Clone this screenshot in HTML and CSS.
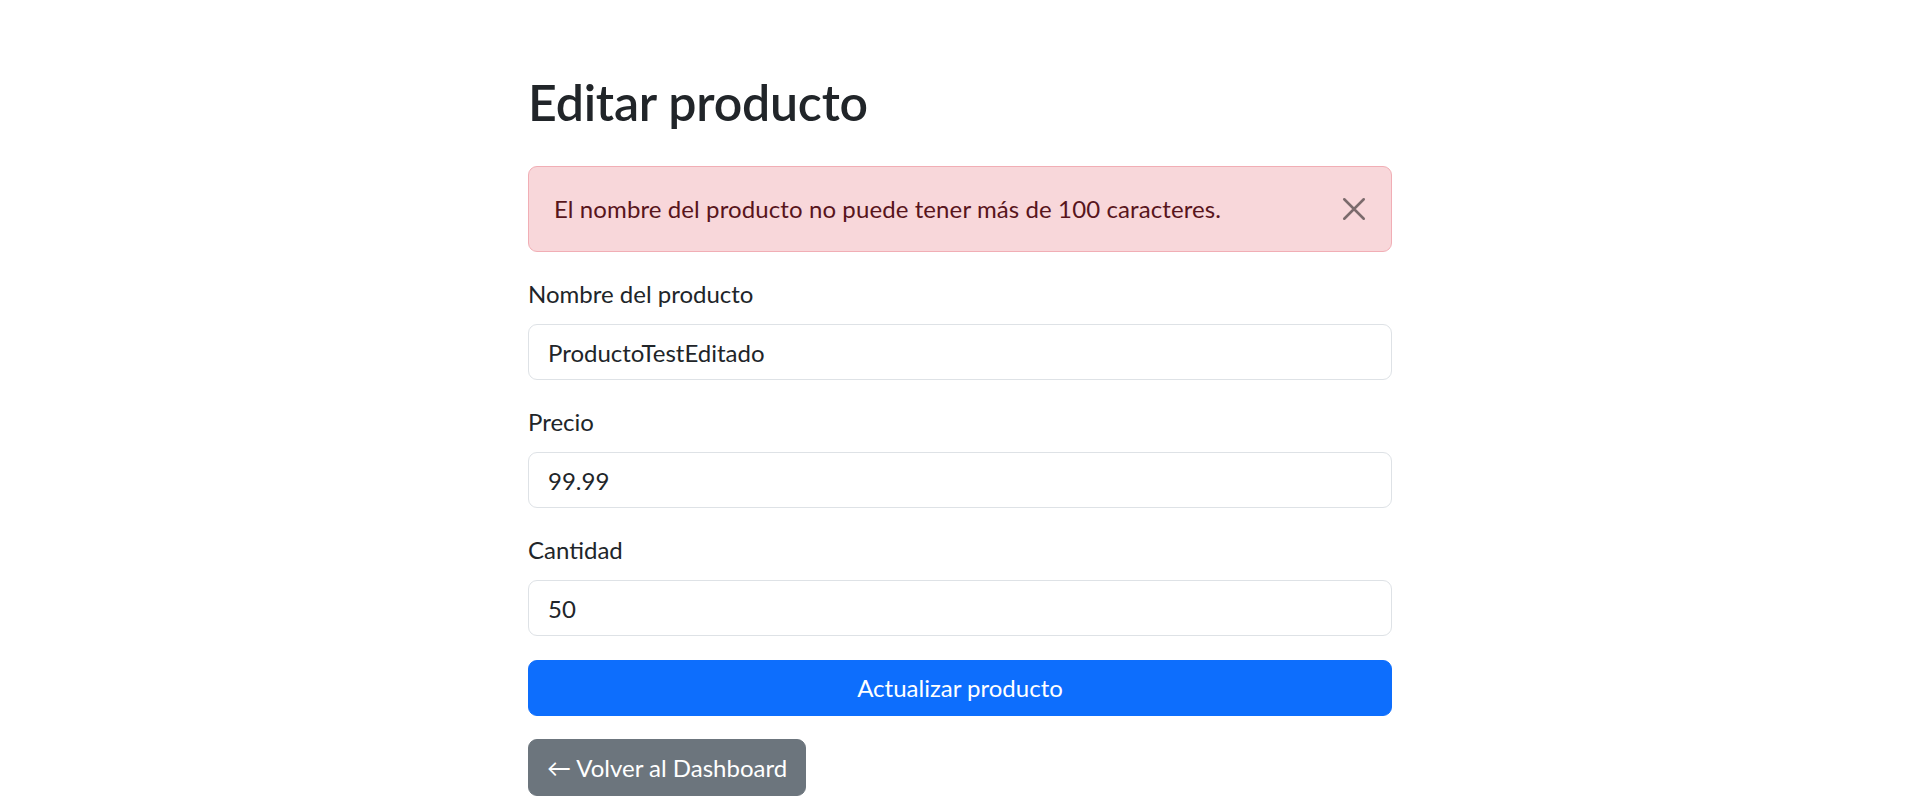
FILE: index.html
```html
<!DOCTYPE html>
<html lang="es">
<head>
<meta charset="utf-8">
<title>Editar producto</title>
<link rel="stylesheet" href="styles.css">
</head>
<body>
<main class="container">
  <h1 class="title">Editar producto</h1>
  <div class="alert" role="alert">
    <span class="alert-text">El nombre del producto no puede tener más de 100 caracteres.</span>
    <button class="btn-close" type="button" aria-label="Close">
      <svg viewBox="0 0 16 16" width="24" height="24"><path d="M1.5 1.5 L14.5 14.5 M14.5 1.5 L1.5 14.5" stroke="#000" stroke-width="1.7" stroke-linecap="round" fill="none"/></svg>
    </button>
  </div>
  <form class="form">
    <div class="group">
      <label class="label">Nombre del producto</label>
      <input class="input" type="text" value="ProductoTestEditado">
    </div>
    <div class="group">
      <label class="label">Precio</label>
      <input class="input" type="text" value="99.99">
    </div>
    <div class="group">
      <label class="label">Cantidad</label>
      <input class="input" type="text" value="50">
    </div>
    <button class="btn btn-primary" type="button">Actualizar producto</button>
  </form>
  <div class="back-row">
    <a class="btn btn-secondary" href="#">← Volver al Dashboard</a>
  </div>
</main>
</body>
</html>
```
FILE: styles.css
```css
* { box-sizing: border-box; }
html, body { margin: 0; padding: 0; background: #fff; }
body {
  font-family: Lato, "Noto Sans", sans-serif;
  color: #212529;
  font-size: 24px;
  line-height: 1.5;
}
.container {
  width: 864px;
  margin: 0 auto;
  padding-top: 72px;
}
.title {
  font-size: 50px;
  font-weight: 600;
  line-height: 60px;
  letter-spacing: -0.2px;
  margin: 0 0 34px 0;
}
.alert {
  position: relative;
  background: #f8d7da;
  border: 1px solid #f1aeb5;
  color: #58151c;
  border-radius: 9px;
  padding: 24px 72px 24px 25px;
  margin-bottom: 24px;
}
.alert-text { letter-spacing: 0.1px; }
.btn-close {
  position: absolute;
  top: 0;
  right: 0;
  border: 0;
  background: transparent;
  padding: 30px 25px;
  opacity: 0.5;
  display: flex;
  cursor: pointer;
}
.btn-close svg { display: block; }
.form { margin: 0; }
.group { margin-bottom: 24px; }
.label {
  display: block;
  line-height: 36px;
  margin-bottom: 12px;
}
.input {
  display: block;
  width: 100%;
  height: 56px;
  border: 1px solid #dee2e6;
  border-radius: 9px;
  padding: 0 19px;
  font-family: inherit;
  font-size: 24px;
  color: #212529;
  background: #fff;
  outline: none;
}
.btn {
  font-family: inherit;
  font-size: 24px;
  line-height: 36px;
  border: 1.5px solid transparent;
  border-radius: 9px;
  color: #fff;
  text-decoration: none;
  cursor: pointer;
}
.btn-primary {
  display: block;
  width: 100%;
  height: 56px;
  background: #0d6efd;
  border-color: #0d6efd;
  text-align: center;
}
.back-row {
  margin-top: 23px;
  display: flex;
}
.btn-secondary {
  display: inline-flex;
  align-items: center;
  height: 57px;
  padding: 0 18px;
  background: #6c757d;
  border-color: #6c757d;
}
```
